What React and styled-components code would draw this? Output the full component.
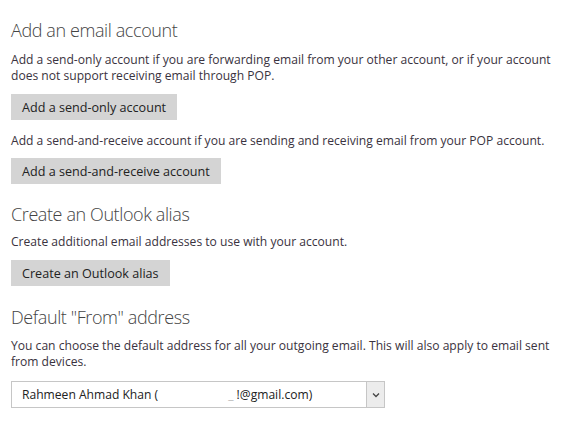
import React from 'react';
import styled, { createGlobalStyle } from 'styled-components';

const Global = createGlobalStyle`
  html, body {
    margin: 0;
    padding: 0;
    background: #ffffff;
  }
  body {
    font-family: "Open Sans", "Noto Sans", "Liberation Sans", sans-serif;
    color: #333;
  }
`;

const Page = styled.div`
  padding: 17px 11px 0 11px;
  width: 548px;
`;

const Section = styled.section`
  display: flex;
  flex-direction: column;
  align-items: flex-start;
  margin-bottom: ${(p) => p.gap || 17}px;
`;

const Heading = styled.h2`
  margin: 0 0 ${(p) => p.after || 8}px 0;
  font-size: 18px;
  line-height: 26px;
  font-weight: 300;
  color: #444;
  letter-spacing: -0.4px;
`;

const Text = styled.p`
  margin: 0 0 ${(p) => p.after || 10}px 0;
  font-size: 12.1px;
  line-height: 16px;
  color: #3a3340;
`;

const Button = styled.button`
  height: 26px;
  padding: 0 11px;
  margin: 0 0 ${(p) => p.after || 0}px 0;
  border: none;
  background: #d4d4d4;
  font-family: inherit;
  font-size: 12.6px;
  color: #222;
  cursor: pointer;
`;

const Select = styled.div`
  display: flex;
  align-items: stretch;
  width: 372px;
  height: 25px;
  border: 1px solid #c6c6c6;
  background: #fff;
  font-size: 12.1px;
  color: #222;
`;

const SelectValue = styled.div`
  flex: 1;
  display: flex;
  align-items: center;
  padding-left: 10px;
  white-space: pre;
`;

const Redacted = styled.span`
  display: inline-block;
  width: ${(p) => p.w}px;
`;

const Faint = styled.span`
  color: #bbb;
`;

const Arrow = styled.div`
  width: 17px;
  display: flex;
  align-items: center;
  justify-content: center;
  background: #ececec;
  border-left: 1px solid #c6c6c6;
`;

export default function App() {
  return (
    <>
      <Global />
      <Page>
        <Section gap={17}>
          <Heading after={9}>Add an email account</Heading>
          <Text after={10}>
            Add a send-only account if you are forwarding email from your other account, or if your account
            does not support receiving email through POP.
          </Text>
          <Button after={13}>Add a send-only account</Button>
          <Text after={9}>
            Add a send-and-receive account if you are sending and receiving email from your POP account.
          </Text>
          <Button>Add a send-and-receive account</Button>
        </Section>
        <Section gap={18}>
          <Heading after={7}>Create an Outlook alias</Heading>
          <Text after={10}>Create additional email addresses to use with your account.</Text>
          <Button>Create an Outlook alias</Button>
        </Section>
        <Section>
          <Heading after={8}>Default "From" address</Heading>
          <Text after={11}>
            You can choose the default address for all your outgoing email. This will also apply to email sent
            from devices.
          </Text>
          <Select>
            <SelectValue>
              Rahmeen Ahmad Khan (<Redacted w={70} /><Faint>_ </Faint>!@gmail.com)
            </SelectValue>
            <Arrow>
              <svg width="8" height="6" viewBox="0 0 8 6">
                <path d="M1 1.5 L4 4.5 L7 1.5" fill="none" stroke="#444" strokeWidth="1.3" />
              </svg>
            </Arrow>
          </Select>
        </Section>
      </Page>
    </>
  );
}
